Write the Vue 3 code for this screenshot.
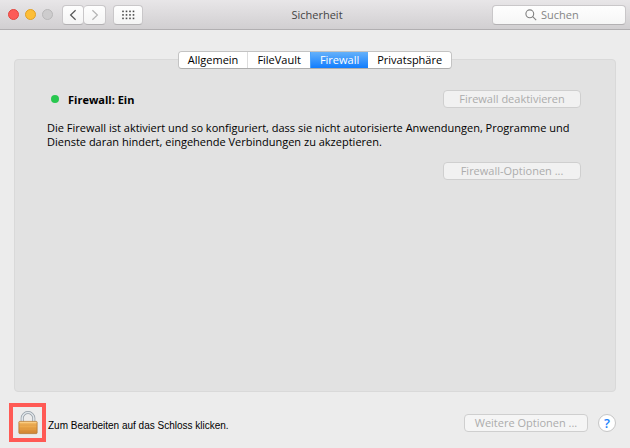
<template>
  <div class="window">
    <header class="toolbar">
      <div class="toolbar-left">
        <div class="lights">
          <button class="light close" aria-label="Schließen"></button>
          <button class="light minimize" aria-label="Minimieren"></button>
          <button class="light zoom" aria-label="Zoomen" disabled></button>
        </div>
        <div class="nav">
          <button class="tool-btn back" aria-label="Zurück">
            <svg width="8" height="12" viewBox="0 0 8 12">
              <path d="M6.6 1.2 1.6 6l5 4.8" fill="none" stroke="#555" stroke-width="1.2" />
            </svg>
          </button>
          <button class="tool-btn forward" aria-label="Vorwärts" disabled>
            <svg width="8" height="12" viewBox="0 0 8 12">
              <path d="M1.4 1.2 6.4 6l-5 4.8" fill="none" stroke="#b4b4b4" stroke-width="1.2" />
            </svg>
          </button>
        </div>
        <button class="tool-btn grid-btn" aria-label="Alle einblenden">
          <svg width="13" height="10" viewBox="0 0 13 10" fill="#4a4a4a">
            <template v-for="row in 3" :key="row">
              <rect
                v-for="col in 4"
                :key="col"
                :x="(col - 1) * 3.5 + 0.2"
                :y="(row - 1) * 3.5 + 0.6"
                width="1.6"
                height="1.6"
              />
            </template>
          </svg>
        </button>
      </div>
      <h1 class="title">Sicherheit</h1>
      <label class="search">
        <svg width="12" height="12" viewBox="0 0 12 12" fill="none" stroke="#808080" stroke-width="1.1">
          <circle cx="4.8" cy="4.8" r="3.9" />
          <path d="M7.7 7.7 11.2 11.2" />
        </svg>
        <input v-model="query" type="text" placeholder="Suchen" aria-label="Suchen" />
      </label>
    </header>

    <main class="content">
      <nav class="tabs">
        <button
          v-for="tab in tabs"
          :key="tab"
          class="tab"
          :class="{ active: tab === activeTab }"
          @click="activeTab = tab"
        >
          {{ tab }}
        </button>
      </nav>

      <section class="panel">
        <div class="row">
          <div class="status">
            <span class="status-dot"></span>
            <strong>Firewall: Ein</strong>
          </div>
          <button class="btn" disabled>Firewall deaktivieren</button>
        </div>
        <p class="description">
          Die Firewall ist aktiviert und so konfiguriert, dass sie nicht autorisierte Anwendungen, Programme und
          <br />
          Dienste daran hindert, eingehende Verbindungen zu akzeptieren.
        </p>
        <div class="row end">
          <button class="btn" disabled>Firewall-Optionen ...</button>
        </div>
      </section>
    </main>

    <footer class="footer">
      <button id="lock" class="lock" aria-label="Schloss">
        <svg width="20" height="24" viewBox="0 0 20 24">
          <defs>
            <linearGradient id="body" x1="0" y1="0" x2="0" y2="1">
              <stop offset="0" stop-color="#f3bc68" />
              <stop offset="0.5" stop-color="#eba648" />
              <stop offset="1" stop-color="#cf8230" />
            </linearGradient>
          </defs>
          <path d="M4.2 11V7.3a5.8 5.8 0 0 1 11.6 0V11" fill="none" stroke="#929ba3" stroke-width="3" />
          <path d="M4.2 11V7.3a5.8 5.8 0 0 1 11.6 0V11" fill="none" stroke="#dfe5ea" stroke-width="1.6" />
          <rect x="0.9" y="10.4" width="18.2" height="12.2" rx="0.8" fill="url(#body)" stroke="#b47731" stroke-width="0.8" />
          <path d="M1.5 11.3h17" stroke="#ffd998" stroke-width="0.8" />
          <path d="M1.5 14h17M1.5 17h17M1.5 20h17" stroke="#c98738" stroke-width="0.5" opacity="0.7" />
        </svg>
      </button>
      <label class="lock-text" for="lock">Zum Bearbeiten auf das Schloss klicken.</label>
      <button class="btn more" disabled>Weitere Optionen ...</button>
      <button class="help" aria-label="Hilfe">?</button>
    </footer>
  </div>
</template>

<script setup>
import { ref } from 'vue'

const tabs = ['Allgemein', 'FileVault', 'Firewall', 'Privatsphäre']
const activeTab = ref('Firewall')
const query = ref('')
</script>

<style>
body {
  background: #ececec;
}
</style>

<style scoped>
.window {
  display: flex;
  flex-direction: column;
  min-height: 100vh;
  font-family: "Open Sans", "Liberation Sans", sans-serif;
  font-size: 11px;
  color: #000;
  background: #ececec;
}

button,
input {
  font: inherit;
  box-sizing: border-box;
}

.toolbar {
  display: grid;
  grid-template-columns: 1fr auto 1fr;
  align-items: center;
  height: 30px;
  padding: 0 4px 0 8px;
  box-sizing: border-box;
  background: linear-gradient(#e8e6e8, #d1cfd1);
  border-bottom: 1px solid #b1afb1;
}

.toolbar-left {
  display: flex;
  align-items: center;
}

.lights {
  display: flex;
  gap: 6px;
  margin-right: 9px;
}

.light {
  width: 11px;
  height: 11px;
  padding: 0;
  border: 1px solid;
  border-radius: 50%;
}

.close {
  background: #fc5b57;
  border-color: #e2463f;
}

.minimize {
  background: #fdbe37;
  border-color: #e1a025;
}

.zoom {
  background: #cdcccd;
  border-color: #b9b8b9;
}

.nav {
  display: flex;
  margin-right: 7px;
}

.tool-btn {
  display: flex;
  align-items: center;
  justify-content: center;
  width: 22px;
  height: 20px;
  padding: 0;
  background: linear-gradient(#fefefe, #f4f4f4);
  border: 1px solid #c9c7c9;
  border-bottom-color: #b3b1b3;
  border-radius: 4px;
}

.forward {
  border-left: none;
}

.grid-btn {
  width: 30px;
}

.title {
  margin: 0;
  font-size: 11px;
  font-weight: 400;
  color: #444;
}

.search {
  display: flex;
  align-items: center;
  justify-content: center;
  justify-self: end;
  gap: 4px;
  width: 134px;
  height: 20px;
  box-sizing: border-box;
  background: linear-gradient(#fefefe, #f6f6f6);
  border: 1px solid #c9c7c9;
  border-bottom-color: #b3b1b3;
  border-radius: 4px;
}

.search input {
  width: 52px;
  padding: 0;
  border: none;
  outline: none;
  background: none;
}

.search input::placeholder {
  color: #858585;
  opacity: 1;
}

.content {
  display: flex;
  flex: 1;
  flex-direction: column;
  padding: 21px 14px 0;
}

.tabs {
  display: flex;
  align-self: center;
  z-index: 1;
  margin-bottom: -10px;
  border: 1px solid #c3c3c3;
  border-bottom-color: #adadad;
  border-radius: 4px;
  overflow: hidden;
}

.tab {
  height: 16px;
  padding: 0 9px;
  line-height: 16px;
  color: #000;
  background: #fff;
  border: none;
}

.tab + .tab {
  border-left: 1px solid #dcdcdc;
}

.tab.active {
  color: #fff;
  background: linear-gradient(#65b1fa, #117dfe);
  border-left-color: #4ba2fb;
}

.tab.active + .tab {
  border-left: none;
}

.panel {
  flex: 1;
  padding: 30px 34px 30px 32px;
  background: #e2e2e2;
  border: 1px solid #d9d9d9;
  border-radius: 4px;
}

.row {
  display: flex;
  align-items: center;
  justify-content: space-between;
}

.end {
  justify-content: flex-end;
}

.status {
  display: flex;
  align-items: center;
  gap: 9px;
  padding-left: 4px;
}

.status-dot {
  width: 8px;
  height: 8px;
  border-radius: 50%;
  background: #28c74f;
}

.btn {
  min-width: 138px;
  height: 18px;
  padding: 0 8px;
  line-height: 16px;
  color: #acacac;
  background: #f1f1f1;
  border: 1px solid #cfcfcf;
  border-radius: 4px;
}

.description {
  margin: 13px 0;
  line-height: 14px;
}

.footer {
  display: flex;
  align-items: center;
  padding: 11px 14px 6px 9px;
}

.lock {
  display: flex;
  align-items: center;
  justify-content: center;
  width: 37px;
  height: 39px;
  padding: 0;
  background: none;
  border: 4px solid #ff5a55;
}

.lock-text {
  flex: 1;
  margin-left: 2px;
  padding-top: 5px;
  font-family: "Liberation Sans", Arial, sans-serif;
  font-size: 10px;
}

.more {
  min-width: 124px;
  background: #f5f5f5;
}

.help {
  width: 18px;
  height: 18px;
  margin-left: 10px;
  padding: 0;
  font-size: 13px;
  font-weight: 600;
  line-height: 16px;
  color: #1a82fb;
  background: #fff;
  border: 1px solid #c6c6c6;
  border-radius: 50%;
}
</style>
